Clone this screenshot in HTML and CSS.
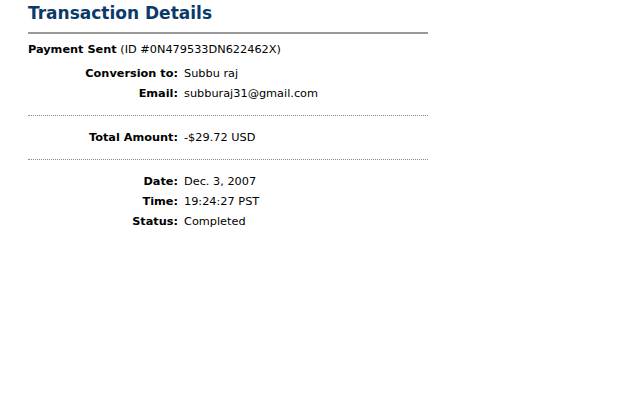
FILE: index.html
```html
<!DOCTYPE html>
<html lang="en">
<head>
    <meta charset="UTF-8">
    <title>Transaction Details</title>
    <link rel="stylesheet" href="styles.css">
</head>
<body>
    <div class="details">
        <h1>Transaction Details</h1>
        <p class="summary"><b>Payment Sent</b> (ID #0N479533DN622462X)</p>

        <div class="group">
            <div class="row"><span class="label">Conversion to:</span><span class="value">Subbu raj</span></div>
            <div class="row"><span class="label">Email:</span><span class="value">subburaj31@gmail.com</span></div>
        </div>
        <div class="group">
            <div class="row"><span class="label">Total Amount:</span><span class="value">-$29.72 USD</span></div>
        </div>
        <div class="group last">
            <div class="row"><span class="label">Date:</span><span class="value">Dec. 3, 2007</span></div>
            <div class="row"><span class="label">Time:</span><span class="value">19:24:27 PST</span></div>
            <div class="row"><span class="label">Status:</span><span class="value">Completed</span></div>
        </div>
    </div>
</body>
</html>
```

FILE: styles.css
```css
body {
    font-family: "DejaVu Sans", Verdana, sans-serif;
    font-size: 11.3px;
    color: #000;
    background-color: #fff;
    margin: 0;
    padding: 0;
}
.details {
    width: 400px;
    margin-left: 28px;
}
h1 {
    font-size: 17px;
    color: #0b3a6a;
    margin: 0;
    padding-top: 2px;
    height: 30px;
    line-height: 22px;
    border-bottom: 2px solid #999;
}
.summary {
    margin: 0;
    padding-top: 6px;
    line-height: 20px;
    height: 24px;
}
.group {
    padding: 0 0 11px;
    margin-bottom: 12px;
    border-bottom: 1px dotted #888;
}
.group.last {
    border-bottom: none;
}
.row {
    display: flex;
    gap: 6px;
    line-height: 20px;
}
.label {
    width: 150px;
    text-align: right;
    font-weight: bold;
}
```
